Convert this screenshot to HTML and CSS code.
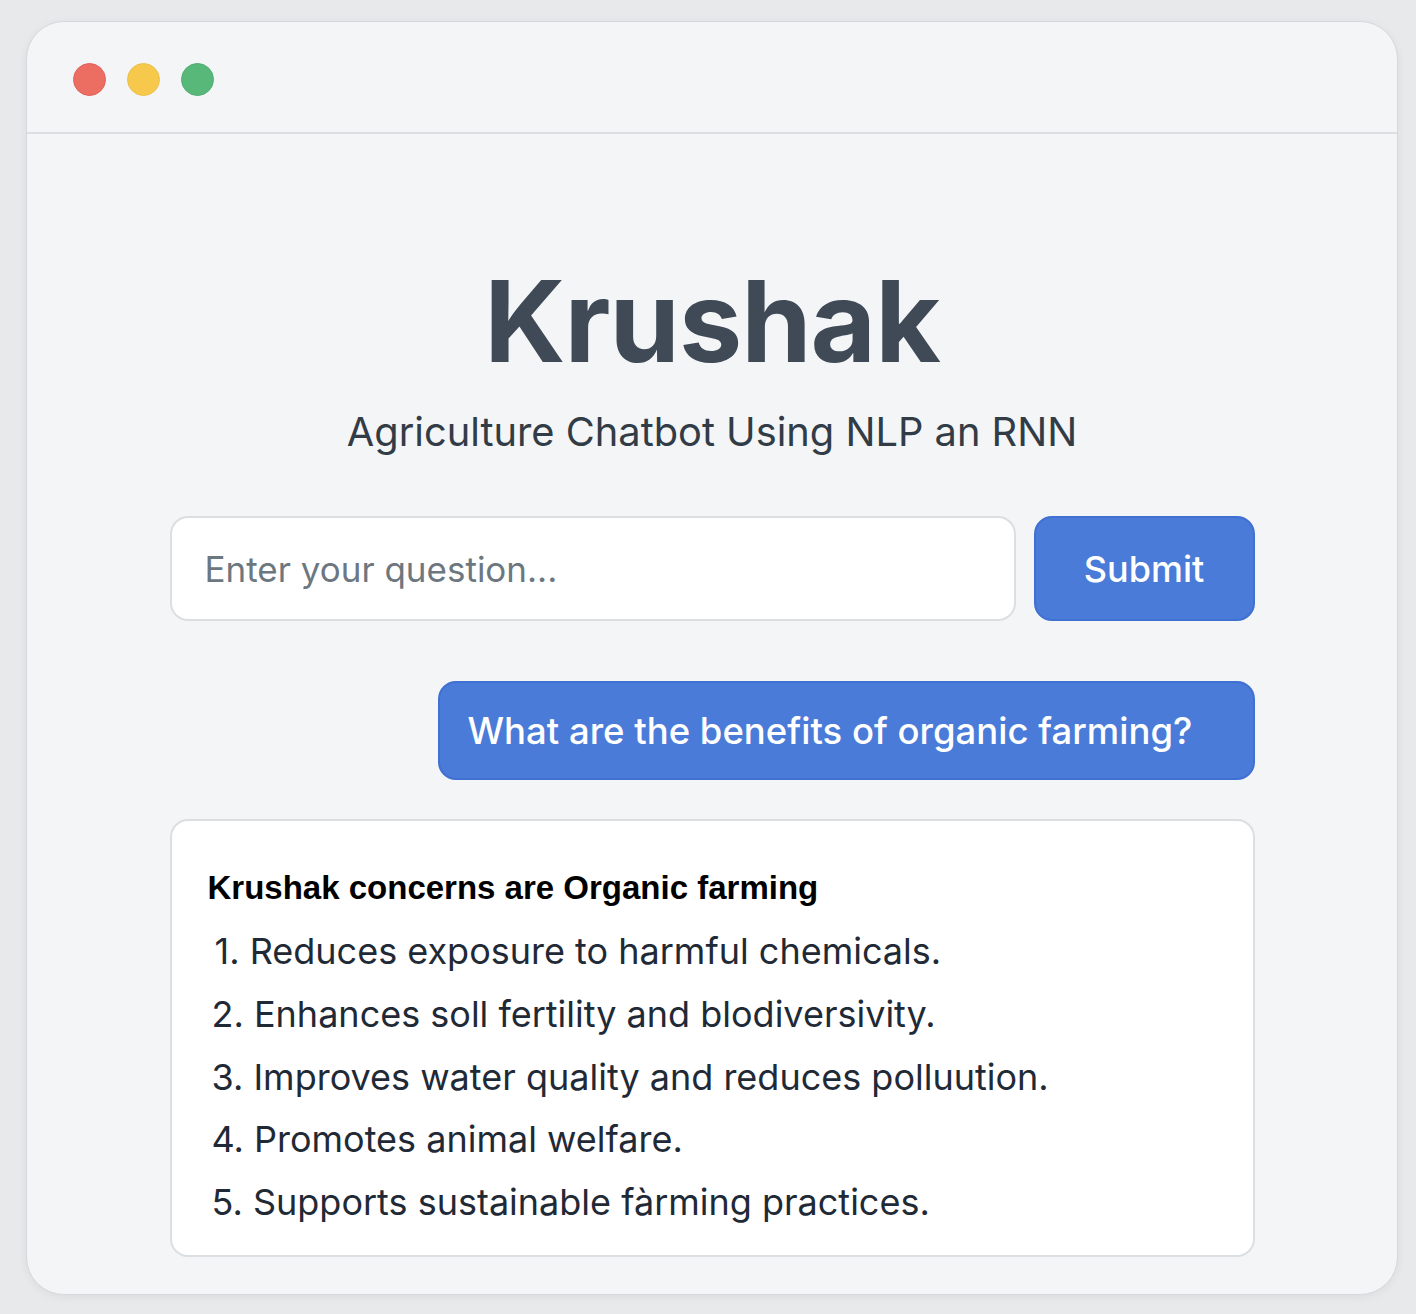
FILE: index.html
```html
<!DOCTYPE html>
<html lang="en">
<head>
<meta charset="utf-8">
<title>Krushak</title>
<link rel="stylesheet" href="styles.css">
</head>
<body>
<div class="window">
  <div class="titlebar">
    <span class="dot red"></span>
    <span class="dot yellow"></span>
    <span class="dot green"></span>
  </div>
  <main class="main">
    <h1 class="title">Krushak</h1>
    <p class="subtitle">Agriculture Chatbot Using NLP an RNN</p>
    <form class="ask">
      <input class="question" type="text" placeholder="Enter your question...">
      <button class="submit" type="button">Submit</button>
    </form>
    <div class="bubble-row">
      <div class="bubble">What are the benefits of organic farming?</div>
    </div>
    <section class="answer">
      <h2 class="answer-head">Krushak concerns are Organic farming</h2>
      <ol class="answer-list">
        <li class="first">1. Reduces exposure to harmful chemicals.</li>
        <li>2. Enhances soll fertility and blodiversivity.</li>
        <li>3. Improves water quality and reduces polluution.</li>
        <li>4. Promotes animal welfare.</li>
        <li>5. Supports sustainable fàrming practices.</li>
      </ol>
    </section>
  </main>
</div>
</body>
</html>
```

FILE: styles.css
```css
* { box-sizing: border-box; }
html, body { margin: 0; padding: 0; }
body {
  background: #e8e9eb;
  padding: 21px 18px 19px 26px;
  font-family: Inter, "Noto Sans", sans-serif;
}
.window {
  width: 1372px;
  height: 1274px;
  background: #f4f5f7;
  border: 1px solid #d6d8db;
  border-radius: 38px;
  box-shadow: 0 2px 10px rgba(0,0,0,0.06);
  overflow: hidden;
}
.titlebar {
  height: 112px;
  border-bottom: 2px solid #dcdee1;
  display: flex;
  align-items: center;
  gap: 21px;
  padding: 4px 0 0 46px;
}
.dot {
  width: 33px;
  height: 33px;
  border-radius: 50%;
  display: block;
}
.red { background: #ec6e63; border: 1px solid #e0605a; }
.yellow { background: #f6c94d; border: 1px solid #ecc04a; }
.green { background: #58b879; border: 1px solid #4fae70; }
.main {
  display: flex;
  flex-direction: column;
  align-items: center;
  padding-top: 130px;
}
.title {
  margin: 0;
  font-size: 113px;
  line-height: 114px;
  font-weight: 700;
  color: #3f4a56;
  letter-spacing: -1px;
}
.subtitle {
  margin: 30px 0 0;
  font-size: 39.8px;
  line-height: 48px;
  color: #323c46;
}
.ask {
  margin: 60px 0 0;
  width: 1085px;
  display: flex;
  gap: 18px;
}
.question {
  flex: 1;
  height: 105px;
  border: 2px solid #dcdfe2;
  border-radius: 18px;
  background: #fff;
  padding: 0 33px;
  font-family: Inter, "Noto Sans", sans-serif;
  font-size: 35px;
  color: #333;
  outline: none;
}
.question::placeholder { color: #6c7780; }
.submit {
  width: 221px;
  height: 105px;
  border: 2px solid #3f70d2;
  border-radius: 18px;
  background: #4a7bd9;
  color: #fff;
  font-family: Inter, "Noto Sans", sans-serif;
  font-size: 36px;
  font-weight: 500;
}
.bubble-row {
  margin-top: 60px;
  width: 1085px;
  display: flex;
  justify-content: flex-end;
}
.bubble {
  width: 817px;
  height: 99px;
  background: #4a7bd9;
  border: 2px solid #3f70d2;
  border-radius: 18px;
  color: #fff;
  font-size: 36.5px;
  font-weight: 500;
  display: flex;
  align-items: center;
  padding-left: 28px;
}
.answer {
  margin-top: 39px;
  width: 1085px;
  height: 438px;
  background: #fff;
  border: 2px solid #dcdfe2;
  border-radius: 18px;
  padding: 45px 0 0 36px;
}
.answer-head {
  margin: 0 0 10px;
  font-family: "Liberation Sans", Arial, sans-serif;
  font-size: 33px;
  line-height: 44px;
  font-weight: 700;
  color: #000;
}
.answer-list {
  list-style: none;
  margin: 0;
  padding: 0;
}
.answer-list li {
  font-size: 36px;
  line-height: 62.8px;
  color: #1f2a36;
  margin-left: 4px;
}
.answer-list li.first { margin-left: 7px; }
```
